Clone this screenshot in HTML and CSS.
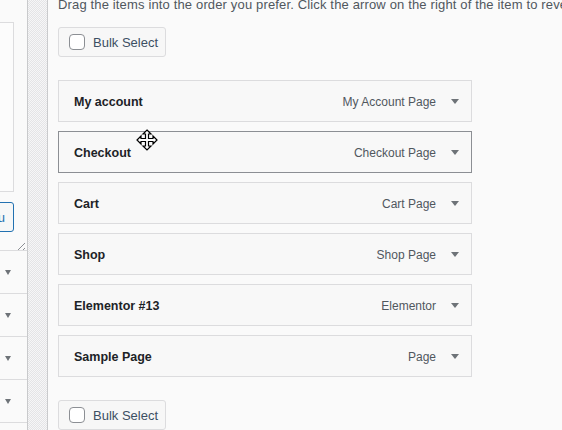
FILE: index.html
```html
<!DOCTYPE html>
<html lang="en">

<head>
  <meta charset="UTF-8">
  <title>Menus</title>
  <link rel="stylesheet" href="styles.css">
</head>

<body>
  <div class="sidebar">
    <div class="side-inner">
      <div class="pages-box"></div>
      <button class="add-btn">Add to Menu</button>
      <span class="grip"></span>
      <ul class="accordion">
        <li><i class="caret"></i></li>
        <li><i class="caret"></i></li>
        <li><i class="caret"></i></li>
        <li><i class="caret"></i></li>
      </ul>
    </div>
  </div>

  <div class="gutter"></div>

  <div class="main">
    <p class="hint">Drag the items into the order you prefer. Click the arrow on the right of the item to reve</p>

    <button class="bulk"><span class="check"></span>Bulk Select</button>

    <ul class="menu">
      <li class="item"><span class="title">My account</span><span class="type">My Account Page</span><i class="caret"></i></li>
      <li class="item dragging"><span class="title">Checkout</span><span class="type">Checkout Page</span><i class="caret"></i>
        <svg class="cursor" width="22" height="22" viewBox="0 0 22 22">
          <path d="M11 1 L15 5 L12.5 5 L12.5 9.5 L17 9.5 L17 7 L21 11 L17 15 L17 12.5 L12.5 12.5 L12.5 17 L15 17 L11 21 L7 17 L9.5 17 L9.5 12.5 L5 12.5 L5 15 L1 11 L5 7 L5 9.5 L9.5 9.5 L9.5 5 L7 5 Z" fill="#fff" stroke="#000" stroke-width="1.2" stroke-linejoin="miter"/>
        </svg>
      </li>
      <li class="item"><span class="title">Cart</span><span class="type">Cart Page</span><i class="caret"></i></li>
      <li class="item"><span class="title">Shop</span><span class="type">Shop Page</span><i class="caret"></i></li>
      <li class="item"><span class="title">Elementor #13</span><span class="type">Elementor</span><i class="caret"></i></li>
      <li class="item"><span class="title">Sample Page</span><span class="type">Page</span><i class="caret"></i></li>
    </ul>

    <button class="bulk"><span class="check"></span>Bulk Select</button>
  </div>
</body>

</html>
```

FILE: styles.css
```css
html,
body {
  margin: 0;
  height: 430px;
  overflow: hidden;
}

body {
  display: flex;
  background: #fafafa;
  font-family: "Liberation Sans", Arial, sans-serif;
  font-size: 13px;
  color: #1d2327;
}

/* left column, cut off by the window */

.sidebar {
  width: 27px;
  flex: none;
  display: flex;
  justify-content: flex-end;
  overflow: hidden;
  background: #fafafa;
  border-right: 1px solid #c9cacc;
}

.side-inner {
  width: 220px;
  flex: none;
}

.pages-box {
  margin: 22px 13px 0 12px;
  height: 168px;
  background: #fcfcfc;
  border: 1px solid #dcdcde;
}

.add-btn {
  display: block;
  margin: 10px 13px 0 auto;
  height: 30px;
  padding: 0 8px;
  font: 13px "Liberation Sans", Arial, sans-serif;
  color: #2271b1;
  background: #f6f7f7;
  border: 1px solid #2271b1;
  border-radius: 3px;
}

.grip {
  display: block;
  margin: 11px 2px 0 auto;
  width: 7px;
  height: 7px;
  background: linear-gradient(135deg, transparent 45%, #8c8f94 45%, #8c8f94 55%, transparent 55%),
    linear-gradient(135deg, transparent 80%, #8c8f94 80%, #8c8f94 92%, transparent 92%);
}

.accordion {
  list-style: none;
  margin: 0;
  padding: 0;
  border-top: 1px solid #dcdcde;
}

.accordion li {
  height: 42px;
  display: flex;
  align-items: center;
  justify-content: flex-end;
  padding: 0 16px 0 12px;
  border-bottom: 1px solid #dcdcde;
}

.caret {
  display: block;
  width: 0;
  height: 0;
  border-left: 4px solid transparent;
  border-right: 4px solid transparent;
  border-top: 5px solid #6e7378;
}

.accordion .caret {
  border-left-width: 3.5px;
  border-right-width: 3.5px;
}

/* dotted splitter */

.gutter {
  width: 19px;
  flex: none;
  border-right: 1px solid #c9cacc;
  background-color: #f0f0f1;
  background-image: repeating-conic-gradient(#e4e4e6 0 25%, #f6f6f7 0 50%);
  background-size: 2px 2px;
}

/* menu structure */

.main {
  flex: 1;
  min-width: 0;
  padding-left: 10px;
}

.hint {
  margin: -5px 0 0;
  line-height: 19px;
  white-space: nowrap;
  letter-spacing: 0.15px;
  color: #50575e;
}

.bulk {
  display: flex;
  align-items: center;
  gap: 8px;
  margin: 13px 0 0;
  height: 30px;
  padding: 0 7px 0 10px;
  white-space: nowrap;
  font: 13px "Liberation Sans", Arial, sans-serif;
  color: #3c4f63;
  background: #f7f7f7;
  border: 1px solid #dcdcde;
  border-radius: 3px;
}

.check {
  width: 14px;
  height: 14px;
  border: 1px solid #8c8f94;
  border-radius: 4px;
  background: #fff;
}

.menu {
  list-style: none;
  margin: 23px 0 0;
  padding: 0;
  width: 414px;
}

.item {
  position: relative;
  display: flex;
  align-items: center;
  height: 39px;
  margin-bottom: 9px;
  padding: 1px 12px 0 15px;
  box-sizing: content-box;
  background: #f8f8f8;
  border: 1px solid #dcdcde;
}

.item.dragging {
  border-color: #8c8f94;
}

.item .title {
  font-weight: bold;
  font-size: 12.5px;
  flex: 1;
}

.item .type {
  font-size: 12px;
  color: #50575e;
  margin-right: 15px;
}

.cursor {
  position: absolute;
  left: 77px;
  top: -3px;
}

.menu + .bulk {
  margin-top: 23px;
}
```
